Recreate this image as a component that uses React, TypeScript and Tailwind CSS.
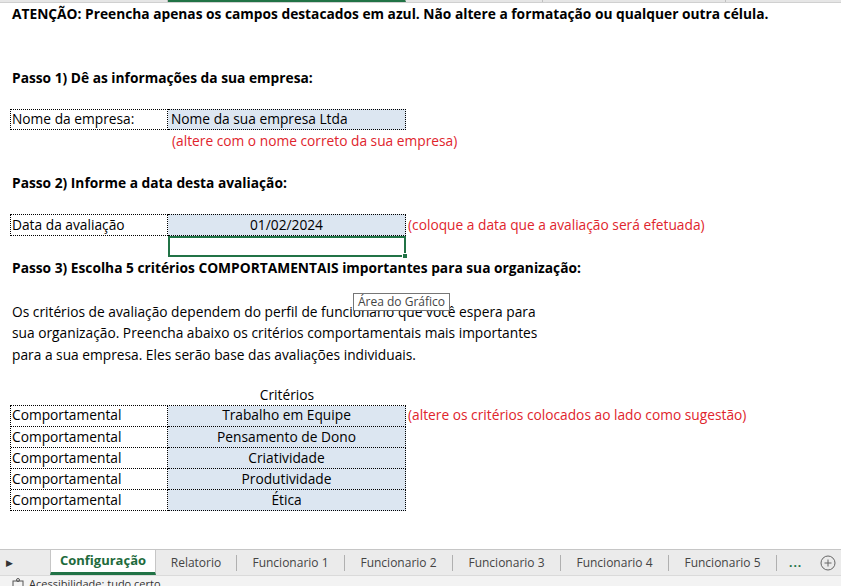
import React from 'react';

const font = { fontFamily: '"Open Sans", "Noto Sans", sans-serif' };

const Row: React.FC<{ children?: React.ReactNode; className?: string }> = ({ children, className = '' }) => (
  <div className={`h-[21.15px] flex items-center whitespace-nowrap ${className}`}>{children}</div>
);

export default function App() {
  const criterios = ['Trabalho em Equipe', 'Pensamento de Dono', 'Criatividade', 'Produtividade', 'Ética'];
  const tabs = ['Relatorio', 'Funcionario 1', 'Funcionario 2', 'Funcionario 3', 'Funcionario 4', 'Funcionario 5'];

  return (
    <div className="relative w-[841px] h-[586px] overflow-hidden bg-white flex flex-col text-[13.75px] text-black" style={font}>
      {/* column header strip */}
      <div className="h-[3px] flex bg-[#e6e6e6] border-b border-[#d0d0d0] shrink-0">
        <div className="w-[168px] border-r border-[#c0c0c0]" />
        <div className="w-[238px] border-r border-[#c0c0c0] bg-[#d2d2d2] border-b-2 border-b-[#217346]" />
        <div className="w-[137px] border-r border-[#c0c0c0]" />
        <div className="w-[183px] border-r border-[#c0c0c0]" />
      </div>

      {/* sheet */}
      <div className="flex-1 relative">
        <Row className="pl-[12px] pt-[2px] font-bold">
          ATENÇÃO: Preencha apenas os campos destacados em azul. Não altere a formatação ou qualquer outra célula.
        </Row>
        <Row />
        <Row />
        <Row className="pl-[12px] pt-[2px] font-bold">Passo 1) Dê as informações da sua empresa:</Row>
        <Row />
        <Row>
          <div className="ml-[10px] w-[158px] h-full flex items-center pl-[1px] border border-dotted border-black">Nome da empresa:</div>
          <div className="w-[238px] h-full flex items-center pl-[3px] bg-[#dce6f1] border-y border-r border-dotted border-black">
            Nome da sua empresa Ltda
          </div>
        </Row>
        <Row className="pl-[172px] pt-[2px] text-[#e0242c]">(altere com o nome correto da sua empresa)</Row>
        <Row />
        <Row className="pl-[12px] pt-[2px] font-bold">Passo 2) Informe a data desta avaliação:</Row>
        <Row />
        <Row>
          <div className="ml-[10px] w-[158px] h-full flex items-center pl-[1px] border border-dotted border-black">Data da avaliação</div>
          <div className="w-[238px] h-full flex items-center justify-center bg-[#dce6f1] border-y border-r border-dotted border-black">
            01/02/2024
          </div>
          <span className="pl-[2px] text-[#e0242c]">(coloque a data que a avaliação será efetuada)</span>
        </Row>
        <Row>
          <div className="relative ml-[168px] w-[238px] h-full border-2 border-[#217346]">
            <div className="absolute -right-[4px] -bottom-[4px] w-[6px] h-[6px] bg-[#217346] border border-white" />
          </div>
        </Row>
        <Row className="pl-[12px] pt-[2px] font-bold">Passo 3) Escolha 5 critérios COMPORTAMENTAIS importantes para sua organização:</Row>
        <Row />
        <Row className="pl-[12px] pt-[6px]">Os critérios de avaliação dependem do perfil de funcionário que você espera para</Row>
        <Row className="pl-[12px] pt-[6px]">sua organização. Preencha abaixo os critérios comportamentais mais importantes</Row>
        <Row className="pl-[12px] pt-[6px]">para a sua empresa. Eles serão base das avaliações individuais.</Row>
        <Row />
        <Row className="pt-[2px]">
          <div className="ml-[168px] w-[238px] text-center">Critérios</div>
        </Row>
        <div className="flex items-start">
          <div className="ml-[10px] border-t border-l border-dotted border-black">
            {criterios.map((c) => (
              <div key={c} className="h-[21.15px] flex">
                <div className="w-[157px] flex items-center pl-[1px] border-r border-b border-dotted border-black">Comportamental</div>
                <div className="w-[238px] flex items-center justify-center bg-[#dce6f1] border-r border-b border-dotted border-black">{c}</div>
              </div>
            ))}
          </div>
          <div className="h-[21.15px] flex items-center pl-[2px] text-[#e0242c] whitespace-nowrap">
            (altere os critérios colocados ao lado como sugestão)
          </div>
        </div>

        {/* tooltip */}
        <div className="absolute left-[353px] top-[290px] h-[18px] px-[4px] flex items-center bg-white border border-[#767676] text-[12px] text-[#444]">
          Área do Gráfico
        </div>
      </div>

      {/* sheet tabs */}
      <div className="h-[26px] shrink-0 flex items-stretch bg-[#ebebeb] border-t border-[#c6c6c6] text-[12px] text-[#444]">
        <div className="w-[50px] flex items-center pl-[6px] text-[9px] text-[#333]">▶</div>
        <div className="w-[106px] flex items-center justify-center bg-white border-b-[3px] border-[#217346] border-l border-l-[#c6c6c6] border-r border-r-[#c6c6c6] font-bold text-[#1e6b3c] text-[13px]">
          Configuração
        </div>
        {tabs.map((t, i) => (
          <div key={t} className="flex items-center">
            <div className={`${i === 0 ? 'w-[80px]' : 'w-[107px]'} text-center`}>{t}</div>
            <div className="w-px h-[16px] bg-[#b0b0b0]" />
          </div>
        ))}
        <div className="flex items-center pl-[12px] font-bold text-[#217346] tracking-[1px]">...</div>
        <div className="flex items-center pl-[18px]">
          <svg width="16" height="16" viewBox="0 0 16 16" fill="none" stroke="#666" strokeWidth="1">
            <circle cx="8" cy="8" r="7" />
            <path d="M8 4.5v7M4.5 8h7" />
          </svg>
        </div>
      </div>

      {/* status bar */}
      <div className="h-[11px] shrink-0 bg-[#f3f3f3] border-t border-[#dadada] flex items-start overflow-hidden text-[11px] text-[#333]">
        <div className="pl-[11px] pt-[2px]">
          <svg width="14" height="14" viewBox="0 0 14 14" fill="none" stroke="#555" strokeWidth="1">
            <rect x="2" y="3" width="10" height="9" />
            <circle cx="7" cy="2" r="1.5" />
          </svg>
        </div>
        <div className="pl-[4px] leading-[14px] mt-[1px]">Acessibilidade: tudo certo</div>
      </div>
    </div>
  );
}
